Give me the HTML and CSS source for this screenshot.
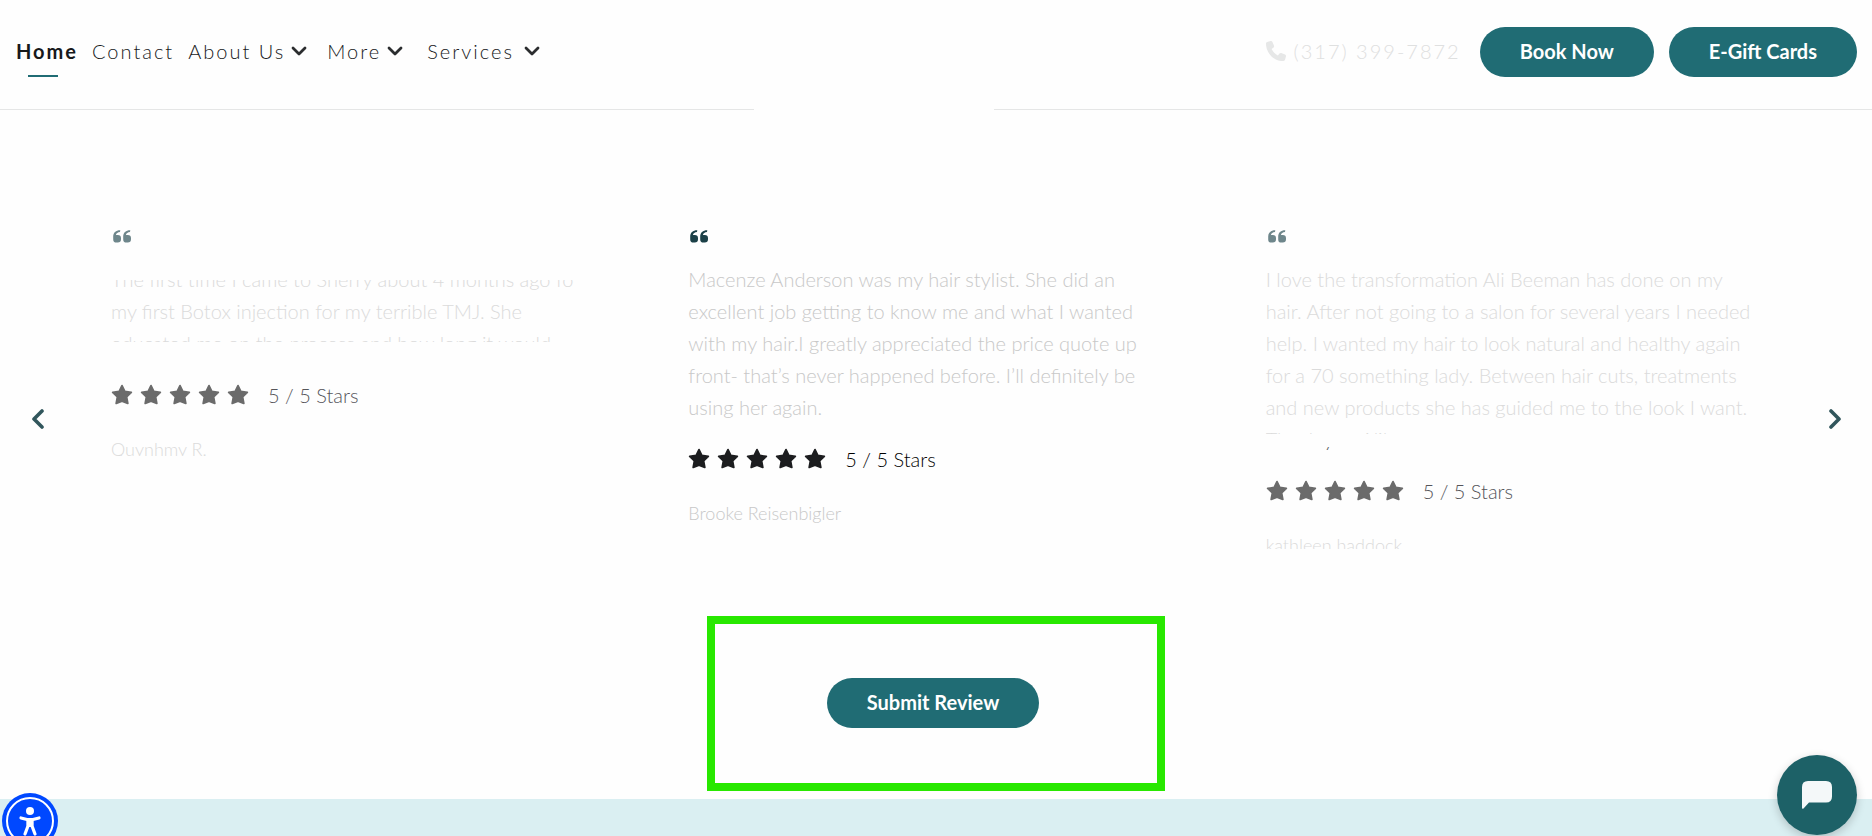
FILE: index.html
```html
<!DOCTYPE html>
<html lang="en">
<head>
<meta charset="utf-8">
<meta name="viewport" content="width=device-width, initial-scale=1">
<title>Reviews</title>
<link rel="stylesheet" href="styles.css">
</head>
<body>
<svg class="symbols" aria-hidden="true">
  <symbol id="star" viewBox="0 0 24 24"><path d="M12 2.600l2.800 5.900 6.500.9-4.700 4.500 1.200 6.500-5.800-2.300-5.800 2.300 1.200-6.500L2.700 9.400l6.500-.9z" fill="currentColor" stroke="currentColor" stroke-width="1.800" stroke-linejoin="round"/></symbol>
  <symbol id="quote" viewBox="0 0 18 13"><path d="M7.300.2C3 .1.200 2.500.200 6.500v2.700A3.300 3.300 0 0 0 3.500 12.600h1.200A3.300 3.300 0 0 0 8 9.300V8.200A3.200 3.200 0 0 0 4.800 5H2.900C3.300 3.200 4.800 2.200 7 2zM17.300.2c-4.300-.1-7.100 2.300-7.100 6.300v2.700a3.300 3.300 0 0 0 3.300 3.400h1.200A3.300 3.300 0 0 0 18 9.300V8.200A3.200 3.200 0 0 0 14.800 5h-1.900c.4-1.800 1.900-2.800 4.100-3z" fill="currentColor"/></symbol>
  <symbol id="down" viewBox="0 0 16 10"><path d="M2 2l6 6 6-6" fill="none" stroke="currentColor" stroke-width="2.800" stroke-linecap="round" stroke-linejoin="round"/></symbol>
</svg>

<header class="header">
  <nav class="nav" aria-label="Main">
    <a class="nav-link nav-current" href="#">Home</a>
    <a class="nav-link" href="#">Contact</a>
    <a class="nav-link" href="#">About Us<svg class="down"><use href="#down"/></svg></a>
    <a class="nav-link nav-spaced" href="#">More<svg class="down"><use href="#down"/></svg></a>
    <a class="nav-link nav-spaced nav-services" href="#">Services<svg class="down"><use href="#down"/></svg></a>
  </nav>
  <div class="actions">
    <a class="phone" href="tel:3173997872"><svg class="phone-icon" viewBox="0 0 512 512"><path fill="currentColor" d="M164.900 24.600c-7.700-18.600-28-28.500-47.400-23.200l-88 24C12.100 30.200 0 46 0 64c0 247.400 200.600 448 448 448 18 0 33.800-12.100 38.600-29.500l24-88c5.300-19.400-4.600-39.700-23.200-47.400l-96-40c-16.300-6.800-35.200-2.100-46.300 11.600L304.700 368C234.300 334.700 177.300 277.700 144 207.300l49.300-40.300c13.700-11.200 18.400-30 11.600-46.300z"/></svg>(317) 399-7872</a>
    <button class="pill" type="button">Book Now</button>
    <button class="pill" type="button">E-Gift Cards</button>
  </div>
</header>

<main class="main">
  <section class="carousel" aria-label="Reviews">
    <button class="arrow arrow-prev" type="button" aria-label="Previous"><svg class="arrow-icon" viewBox="0 0 12 20"><path d="M10 2L2 10l8 8" fill="none" stroke="currentColor" stroke-width="3.600" stroke-linecap="round" stroke-linejoin="round"/></svg></button>
    <div class="slides">
      <article class="slide slide-side">
        <svg class="quote"><use href="#quote"/></svg>
        <p class="text text-cut">The first time I came to Sherry about 4 months ago fo<br>my first Botox injection for my terrible TMJ. She<br>educated me on the process and how long it would</p>
        <div class="rating"><svg class="star"><use href="#star"/></svg><svg class="star"><use href="#star"/></svg><svg class="star"><use href="#star"/></svg><svg class="star"><use href="#star"/></svg><svg class="star"><use href="#star"/></svg><span class="score">5 / 5 Stars</span></div>
        <p class="name name-trim">Quynhmy R.</p>
      </article>
      <article class="slide">
        <svg class="quote"><use href="#quote"/></svg>
        <p class="text text-narrow">Macenze Anderson was my hair stylist. She did an<br>excellent job getting to know me and what I wanted<br>with my hair.I greatly appreciated the price quote up<br>front- that’s never happened before. I’ll definitely be<br>using her again.</p>
        <div class="rating"><svg class="star"><use href="#star"/></svg><svg class="star"><use href="#star"/></svg><svg class="star"><use href="#star"/></svg><svg class="star"><use href="#star"/></svg><svg class="star"><use href="#star"/></svg><span class="score">5 / 5 Stars</span></div>
        <p class="name">Brooke Reisenbigler</p>
      </article>
      <article class="slide slide-side">
        <svg class="quote"><use href="#quote"/></svg>
        <p class="text">I love the transformation Ali Beeman has done on my<br>hair. After not going to a salon for several years I needed<br>help. I wanted my hair to look natural and healthy again<br>for a 70 something lady. Between hair cuts, treatments<br>and new products she has guided me to the look I want.<br><span class="last-line">Thank <span class="tail">y</span>ou Ali!</span></p>
        <div class="rating"><svg class="star"><use href="#star"/></svg><svg class="star"><use href="#star"/></svg><svg class="star"><use href="#star"/></svg><svg class="star"><use href="#star"/></svg><svg class="star"><use href="#star"/></svg><span class="score">5 / 5 Stars</span></div>
        <p class="name name-half">kathleen haddock</p>
      </article>
    </div>
    <button class="arrow arrow-next" type="button" aria-label="Next"><svg class="arrow-icon" viewBox="0 0 12 20"><path d="M2 2l8 8-8 8" fill="none" stroke="currentColor" stroke-width="3.600" stroke-linecap="round" stroke-linejoin="round"/></svg></button>
  </section>
  <div class="highlight"><button class="pill" type="button">Submit Review</button></div>
</main>
<footer class="footer"></footer>

<button class="access" type="button" aria-label="Accessibility"><svg viewBox="0 0 56 56"><circle cx="28" cy="28" r="23" fill="none" stroke="#fff" stroke-width="2"/><circle cx="28" cy="18" r="4" fill="#fff"/><path d="M19 25l6 1.500h6l6-1.500M26 27v6l-3 8M30 27v6l3 8" fill="none" stroke="#fff" stroke-width="3.200" stroke-linecap="round" stroke-linejoin="round"/><path d="M24.800 26h6.400v8h-6.400z" fill="#fff"/></svg></button>
<button class="chat" type="button" aria-label="Chat"><svg viewBox="0 0 80 80"><path d="M31 26h18q6 0 6 6v9.500q0 6-6 6H32l-5.500 6q-1.500 1-1.500-1V32q0-6 6-6z" fill="#f4f8f9"/></svg></button>
</body>
</html>
```
FILE: styles.css
```css
* { box-sizing: border-box; }

body {
  margin: 0;
  min-height: 100vh;
  display: flex;
  flex-direction: column;
  overflow: hidden;
  background: #fefefe;
  color: #1c1d1f;
  font-family: Lato, "Open Sans", sans-serif;
  font-size: 20px;
  font-weight: 300;
  line-height: 32px;
}

button { font-family: inherit; border: 0; cursor: pointer; }
svg { display: block; }
p { margin: 0; }
.symbols { position: absolute; width: 0; height: 0; }

.header {
  display: flex;
  align-items: center;
  justify-content: space-between;
  height: 110px;
  padding: 0 15px 6px 16px;
  background:
    linear-gradient(#fefefe, #fefefe) calc(50% - 62px) 100% / 240px 1px no-repeat,
    linear-gradient(#e5e6e6, #e5e6e6) 0 100% / 100% 1px no-repeat;
}

.nav { display: flex; gap: 14px; padding-bottom: 2px; }
.nav-link {
  display: flex;
  align-items: center;
  gap: 6px;
  color: #17191b;
  letter-spacing: 2px;
  text-decoration: none;
}
.nav-current { position: relative; font-weight: 700; }
.nav-current::after {
  content: "";
  position: absolute;
  left: 12px;
  bottom: -10px;
  width: 30px;
  height: 2px;
  background: #206c74;
}
.nav-spaced { margin-left: 6px; }
.nav-services { gap: 10px; margin-left: 10px; }
.down { width: 16px; height: 10px; color: #2b2d2f; }

.actions { display: flex; align-items: center; gap: 15px; }
.phone {
  display: flex;
  align-items: center;
  gap: 8px;
  margin-right: 4px;
  padding-bottom: 2px;
  color: #dfe0e0;
  letter-spacing: 2px;
  text-decoration: none;
}
.phone-icon { width: 20px; height: 20px; color: #e6e7e7; }

.pill {
  height: 50px;
  padding: 0 40px 2px;
  border-radius: 25px;
  background: #206c74;
  color: #fff;
  font-size: 20px;
  font-weight: 700;
}

.carousel {
  display: grid;
  grid-template-columns: 70px 1fr 70px;
  min-height: 394px;
  margin-top: 112px;
}
.slides { display: grid; grid-template-columns: repeat(3, minmax(0, 1fr)); }
.slide { padding: 8px 0 0 41px; }
.slide-side .quote { color: #6e868b; }
.slide-side .star { color: #6b6b6b; }
.slide-side .score { color: #55555a; }
.slide-side .text, .slide-side .name { color: #dbdbdb; }

.arrow {
  display: flex;
  align-items: center;
  justify-content: center;
  background: none;
  color: #31565c;
}
.arrow-prev { padding: 0 0 0 6px; }
.arrow-next { padding: 0 4px 0 0; }
.arrow-icon { width: 12px; height: 20px; }

.quote { width: 18px; height: 13px; margin: 0 0 20px 2px; color: #1b4047; }
.text { color: #c8c8c8; white-space: nowrap; }
.text-cut { clip-path: inset(17px 0 17px 0); }
.text-narrow { width: 450px; overflow: hidden; }
.last-line {
  display: inline-block;
  clip-path: polygon(0 0, 100% 0, 100% 11px, 0 11px, 0 24px, 100% 24px, 100% 100%, 0 100%);
}
.tail { display: inline-block; clip-path: inset(20px 0 0 0); color: #55565a; }

.rating { display: flex; align-items: center; gap: 5px; margin: 20px 0 0 -1px; }
.star { width: 24px; height: 24px; color: #1c1d1f; }
.score { margin-left: 13px; color: #000; }

.name { margin-top: 22px; color: #c8c8c8; font-size: 18px; }
.name-trim { clip-path: inset(0 0 9px 0); }
.name-half { clip-path: inset(0 0 12px 0); }

.highlight {
  width: fit-content;
  margin: 0 auto 8px;
  padding: 54px 118px 55px 112px;
  border: 8px solid #28e800;
}
.highlight .pill { display: block; }

.footer { flex: 1; background: #daeff2; }

.access, .chat { position: fixed; padding: 0; border-radius: 50%; }
.access { left: 2px; bottom: -13px; width: 56px; height: 56px; background: #0048ff; }
.chat {
  right: 15px;
  bottom: 1px;
  width: 80px;
  height: 80px;
  background: #1d6167;
  box-shadow: 0 3px 10px rgba(0, 0, 0, 0.2);
}
```
